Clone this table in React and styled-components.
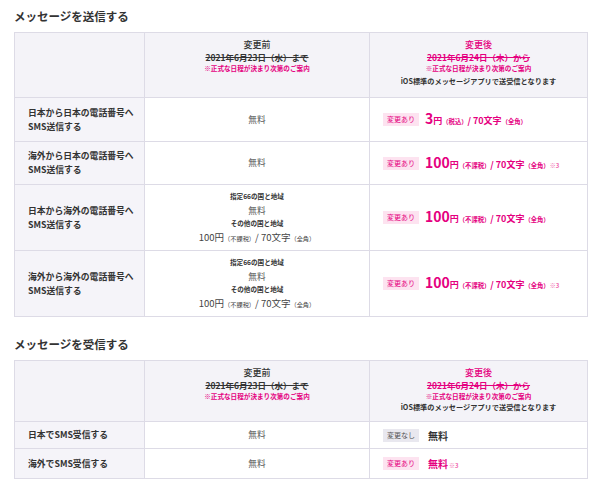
import React from 'react';
import styled, { createGlobalStyle } from 'styled-components';

const GlobalStyle = createGlobalStyle`
  body {
    margin: 0;
    background: #fff;
    font-family: "Noto Sans CJK JP", "Noto Sans", sans-serif;
    color: #333;
  }
`;

const Page = styled.div`
  padding: 8px 13px 0 14px;
`;

const Heading = styled.h2`
  margin: ${({ $first }) => ($first ? '0' : '19px')} 0 8px;
  font-size: 11.5px;
  line-height: 16px;
  font-weight: 700;
  color: #333;
`;

const Table = styled.table`
  width: 573px;
  border-collapse: collapse;
  table-layout: fixed;
  border: 1px solid #dddbe6;
`;

const HeadCell = styled.th`
  border: 1px solid #dddbe6;
  background: #f4f3f8;
  vertical-align: top;
  text-align: center;
  padding: 5px 4px 0;
  height: ${({ $h }) => $h}px;
  box-sizing: border-box;
  font-weight: 400;
`;

const HeadTitle = styled.div`
  font-size: 9px;
  line-height: 13px;
  font-weight: 500;
  color: ${({ $pink }) => ($pink ? '#e5007f' : '#333')};
`;

const HeadDate = styled.div`
  font-size: 8.5px;
  line-height: 12px;
  font-weight: 700;
  color: ${({ $pink }) => ($pink ? '#e5007f' : '#333')};
  text-decoration: line-through;
`;

const Note = styled.div`
  font-size: 6.6px;
  line-height: 11px;
  font-weight: 700;
  color: #e5007f;
`;

const HeadSub = styled.div`
  font-size: 7.2px;
  line-height: ${({ $tight }) => ($tight ? '11px' : '14px')};
  font-weight: 700;
  color: #333;
`;

const LabelCell = styled.th`
  border: 1px solid #dddbe6;
  background: #f5f4f9;
  text-align: left;
  vertical-align: middle;
  padding: 0 8px 0 13px;
  height: ${({ $h }) => $h}px;
  box-sizing: border-box;
  font-size: 8.8px;
  line-height: 14px;
  font-weight: 700;
  color: #333;
`;

const Cell = styled.td`
  border: 1px solid #dddbe6;
  text-align: center;
  vertical-align: middle;
  padding: 0;
  font-size: 8.7px;
  line-height: 13.5px;
  color: #555;
`;

const SubTitle = styled.div`
  font-size: 6.6px;
  font-weight: 700;
  color: #333;
`;

const Plain = styled.div`
  font-size: 9.5px;
  color: #444;
`;

const Tiny = styled.span`
  font-size: 6.2px;
`;

const NewCell = styled.td`
  border: 1px solid #dddbe6;
  vertical-align: middle;
  padding: 0 8px 0 13px;
`;

const Change = styled.div`
  display: flex;
  align-items: center;
  gap: ${({ $gap }) => $gap || 6}px;
`;

const Badge = styled.span`
  display: inline-block;
  height: 13px;
  line-height: 13px;
  padding: 0 4px;
  font-size: 7px;
  background: ${({ $same }) => ($same ? '#e9e8ef' : '#fde3f0')};
  color: ${({ $same }) => ($same ? '#555' : '#e5007f')};
`;

const Price = styled.span`
  color: ${({ $dark }) => ($dark ? '#333' : '#e5007f')};
  font-weight: 700;
  white-space: nowrap;
  line-height: 16px;
`;

const Big = styled.span`
  font-size: 14px;
`;

const Mid = styled.span`
  font-size: 9px;
`;

const Small = styled.span`
  font-size: 6.3px;
  font-weight: 700;
`;

const Ref = styled.span`
  font-size: 6px;
  font-weight: 700;
  color: #f06aae;
  margin-left: ${({ $gap }) => $gap || 0}px;
`;

const Free = styled.span`
  font-size: 10px;
  font-weight: 700;
  color: ${({ $pink }) => ($pink ? '#e5007f' : '#333')};
`;

const Cols = () => (
  <colgroup>
    <col style={{ width: 130 }} />
    <col style={{ width: 225 }} />
    <col style={{ width: 218 }} />
  </colgroup>
);

const Header = ({ h, tight }) => (
  <thead>
    <tr>
      <HeadCell $h={h} />
      <HeadCell $h={h}>
        <HeadTitle>変更前</HeadTitle>
        <HeadDate>2021年6月23日（水）まで</HeadDate>
        <Note>※正式な日程が決まり次第のご案内</Note>
      </HeadCell>
      <HeadCell $h={h}>
        <HeadTitle $pink>変更後</HeadTitle>
        <HeadDate $pink>2021年6月24日（木）から</HeadDate>
        <Note>※正式な日程が決まり次第のご案内</Note>
        <HeadSub $tight={tight}>iOS標準のメッセージアプリで送受信となります</HeadSub>
      </HeadCell>
    </tr>
  </thead>
);

const NewPrice = ({ amount, tax, note }) => (
  <Change>
    <Badge>変更あり</Badge>
    <Price>
      <Big>{amount}</Big>
      <Mid>円</Mid>
      <Small>（{tax}）</Small>
      <Mid>/ 70文字</Mid>
      <Small>（全角）</Small>
      {note && <Ref>※3</Ref>}
    </Price>
  </Change>
);

const Overseas = () => (
  <>
    <SubTitle>指定66の国と地域</SubTitle>
    <div>無料</div>
    <SubTitle>その他の国と地域</SubTitle>
    <Plain>
      100円<Tiny>（不課税）</Tiny>/ 70文字<Tiny>（全角）</Tiny>
    </Plain>
  </>
);

const sendRows = [
  { label: ['日本から日本の電話番号へ', 'SMS送信する'], h: 44, before: <div>無料</div>, amount: '3', tax: '税込' },
  { label: ['海外から日本の電話番号へ', 'SMS送信する'], h: 43, before: <div>無料</div>, amount: '100', tax: '不課税', note: true },
  { label: ['日本から海外の電話番号へ', 'SMS送信する'], h: 66, before: <Overseas />, amount: '100', tax: '不課税' },
  { label: ['海外から海外の電話番号へ', 'SMS送信する'], h: 66, before: <Overseas />, amount: '100', tax: '不課税', note: true },
];

export default function App() {
  return (
    <Page>
      <GlobalStyle />
      <Heading $first>メッセージを送信する</Heading>
      <Table>
        <Cols />
        <Header h={65} />
        <tbody>
          {sendRows.map((r) => (
            <tr key={r.label[0]}>
              <LabelCell $h={r.h}>
                {r.label[0]}
                <br />
                {r.label[1]}
              </LabelCell>
              <Cell>{r.before}</Cell>
              <NewCell>
                <NewPrice amount={r.amount} tax={r.tax} note={r.note} />
              </NewCell>
            </tr>
          ))}
        </tbody>
      </Table>

      <Heading>メッセージを受信する</Heading>
      <Table>
        <Cols />
        <Header h={61} tight />
        <tbody>
          <tr>
            <LabelCell $h={27}>日本でSMS受信する</LabelCell>
            <Cell>無料</Cell>
            <NewCell>
              <Change $gap={9}>
                <Badge $same>変更なし</Badge>
                <Free>無料</Free>
              </Change>
            </NewCell>
          </tr>
          <tr>
            <LabelCell $h={30}>海外でSMS受信する</LabelCell>
            <Cell>無料</Cell>
            <NewCell>
              <Change $gap={9}>
                <Badge>変更あり</Badge>
                <Price>
                  <Free $pink>無料</Free>
                  <Ref $gap={1}>※3</Ref>
                </Price>
              </Change>
            </NewCell>
          </tr>
        </tbody>
      </Table>
    </Page>
  );
}
